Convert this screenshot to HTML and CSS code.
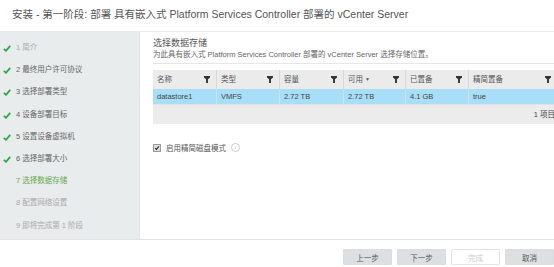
FILE: index.html
```html
<!DOCTYPE html>
<html lang="zh-CN">
<head>
    <meta charset="UTF-8">
    <title>安装 - 第一阶段</title>
    <link rel="stylesheet" href="styles.css">
</head>
<body>
    <div class="header">安装 - 第一阶段: 部署 具有嵌入式 Platform Services Controller 部署的 vCenter Server</div>

    <div class="main">
        <!-- Steps -->
        <ul class="steps">
            <li class="done light"><svg class="tick" viewBox="0 0 8 7"><path d="M0.8 3.8l2.2 2 4.2-5"/></svg>1 简介</li>
            <li class="done"><svg class="tick" viewBox="0 0 8 7"><path d="M0.8 3.8l2.2 2 4.2-5"/></svg>2 最终用户许可协议</li>
            <li class="done"><svg class="tick" viewBox="0 0 8 7"><path d="M0.8 3.8l2.2 2 4.2-5"/></svg>3 选择部署类型</li>
            <li class="done"><svg class="tick" viewBox="0 0 8 7"><path d="M0.8 3.8l2.2 2 4.2-5"/></svg>4 设备部署目标</li>
            <li class="done"><svg class="tick" viewBox="0 0 8 7"><path d="M0.8 3.8l2.2 2 4.2-5"/></svg>5 设置设备虚拟机</li>
            <li class="done"><svg class="tick" viewBox="0 0 8 7"><path d="M0.8 3.8l2.2 2 4.2-5"/></svg>6 选择部署大小</li>
            <li class="current">7 选择数据存储</li>
            <li class="todo">8 配置网络设置</li>
            <li class="todo">9 即将完成第 1 阶段</li>
        </ul>

        <!-- Datastore -->
        <div class="content">
            <div class="page-title">选择数据存储</div>
            <div class="page-desc">为此具有嵌入式 Platform Services Controller 部署的 vCenter Server 选择存储位置。</div>

            <div class="grid">
                <div class="row head">
                    <div class="cell c1">名称<svg class="filter" viewBox="0 0 7 8"><path d="M0 0h7v1.8L4.6 3.6V8H2.4V3.6L0 1.8z"/></svg></div>
                    <div class="cell c2">类型<svg class="filter" viewBox="0 0 7 8"><path d="M0 0h7v1.8L4.6 3.6V8H2.4V3.6L0 1.8z"/></svg></div>
                    <div class="cell c3">容量<svg class="filter" viewBox="0 0 7 8"><path d="M0 0h7v1.8L4.6 3.6V8H2.4V3.6L0 1.8z"/></svg></div>
                    <div class="cell c4">可用 <span class="sort">&#9660;</span><svg class="filter" viewBox="0 0 7 8"><path d="M0 0h7v1.8L4.6 3.6V8H2.4V3.6L0 1.8z"/></svg></div>
                    <div class="cell c5">已置备<svg class="filter" viewBox="0 0 7 8"><path d="M0 0h7v1.8L4.6 3.6V8H2.4V3.6L0 1.8z"/></svg></div>
                    <div class="cell c6">精简置备<svg class="filter" viewBox="0 0 7 8"><path d="M0 0h7v1.8L4.6 3.6V8H2.4V3.6L0 1.8z"/></svg></div>
                </div>
                <div class="row selected">
                    <div class="cell c1">datastore1</div>
                    <div class="cell c2">VMFS</div>
                    <div class="cell c3">2.72 TB</div>
                    <div class="cell c4">2.72 TB</div>
                    <div class="cell c5">4.1 GB</div>
                    <div class="cell c6">true</div>
                </div>
                <div class="grid-footer">1 项目</div>
            </div>

            <label class="option">
                <span class="checkbox"><svg viewBox="0 0 7 7"><path d="M1.2 3.6l1.6 1.6 3-3.6" /></svg></span>
                启用精简磁盘模式
                <span class="info">i</span>
            </label>
        </div>
    </div>

    <div class="footer">
        <button class="btn">上一步</button>
        <button class="btn">下一步</button>
        <button class="btn disabled">完成</button>
        <button class="btn">取消</button>
    </div>
</body>
</html>
```

FILE: styles.css
```css
body {
    margin: 0;
    font-family: "Liberation Sans", Arial, "Noto Sans CJK SC", sans-serif;
    color: #555;
    background-color: #fff;
    overflow: hidden;
}

.header {
    height: 31px;
    padding-left: 12px;
    line-height: 29px;
    font-size: 10.5px;
    color: #555;
}

.main {
    display: flex;
    height: 208px;
}

/* Left steps */
.steps {
    width: 140px;
    flex-shrink: 0;
    margin: 0;
    padding: 6px 0 0 0;
    list-style: none;
    background-color: #e8eced;
    border-right: 1px solid #e2e6e7;
    box-sizing: border-box;
}

.steps li {
    height: 22.2px;
    line-height: 22px;
    padding-left: 16px;
    font-size: 7.5px;
    color: #666;
    position: relative;
}

.steps .tick {
    position: absolute;
    left: 3px;
    top: 8px;
    width: 8px;
    height: 7px;
    fill: none;
    stroke: #2ea84a;
    stroke-width: 1.8;
}

.steps .light {
    color: #aaa;
}

.steps .current {
    color: #6aa84f;
}

.steps .todo {
    color: #aaa;
}

/* Content */
.content {
    flex: 1;
    padding: 6px 0 0 13px;
    overflow: hidden;
    border-top: 1px solid #eceeee;
}

.page-title {
    font-size: 9px;
    line-height: 11px;
    color: #555;
}

.page-desc {
    font-size: 7.5px;
    line-height: 11px;
    color: #666;
    white-space: nowrap;
    padding-bottom: 3px;
    border-bottom: 1px solid #e6e6e6;
    margin-right: -20px;
}

.grid {
    margin-top: 6px;
    width: 404px;
    font-size: 7.5px;
}

.row {
    display: flex;
}

.cell {
    position: relative;
    padding-left: 4px;
    box-sizing: border-box;
    white-space: nowrap;
}

.c1, .c2, .c5 { width: 63px; }
.c3 { width: 64px; }
.c4 { width: 62px; }
.c6 { width: 89px; }

.head {
    height: 19px;
    line-height: 19px;
    background-color: #ebebeb;
    color: #555;
}

.head .cell + .cell {
    border-left: 1px solid #d8d8d8;
}

.filter {
    position: absolute;
    right: 6px;
    top: 6px;
    width: 6px;
    height: 7px;
    fill: #333;
}

.sort {
    font-size: 5px;
    color: #555;
    vertical-align: 1px;
}

.selected {
    height: 15px;
    line-height: 15px;
    background-color: #a9def8;
    color: #444;
}

.selected .cell + .cell {
    border-left: 1px solid #c2e7f9;
}

.grid-footer {
    height: 20px;
    line-height: 20px;
    background-color: #ececec;
    text-align: right;
    padding-right: 2px;
    color: #444;
    border-top: 1px solid #e2e2e2;
    box-sizing: border-box;
}

.option {
    display: flex;
    align-items: center;
    margin-top: 18px;
    font-size: 7.5px;
    color: #555;
}

.checkbox {
    width: 6px;
    height: 6px;
    border: 1px solid #999;
    background-color: #ddd;
    margin-right: 5px;
    display: flex;
}

.checkbox svg {
    width: 6px;
    height: 6px;
    fill: none;
    stroke: #333;
    stroke-width: 1.4;
}

.info {
    width: 7px;
    height: 7px;
    margin-left: 5px;
    border: 1px solid #ccc;
    border-radius: 50%;
    font-size: 5px;
    line-height: 7px;
    text-align: center;
    color: #aaa;
    font-family: "Liberation Serif", serif;
}

/* Bottom buttons */
.footer {
    height: 28px;
    border-top: 1px solid #e3e3e3;
    display: flex;
    justify-content: flex-end;
    align-items: flex-start;
    gap: 5px;
    padding-top: 9px;
    padding-right: 0;
    box-sizing: border-box;
}

.btn {
    width: 49px;
    height: 16px;
    padding: 0;
    border: 1px solid #dadddf;
    background-color: #dde0e2;
    color: #555;
    font-family: "Noto Sans CJK SC", sans-serif;
    font-size: 7.5px;
    border-radius: 1px;
}

.btn.disabled {
    background-color: #fff;
    border-color: #e4e4e4;
    color: #ccc;
}
```
